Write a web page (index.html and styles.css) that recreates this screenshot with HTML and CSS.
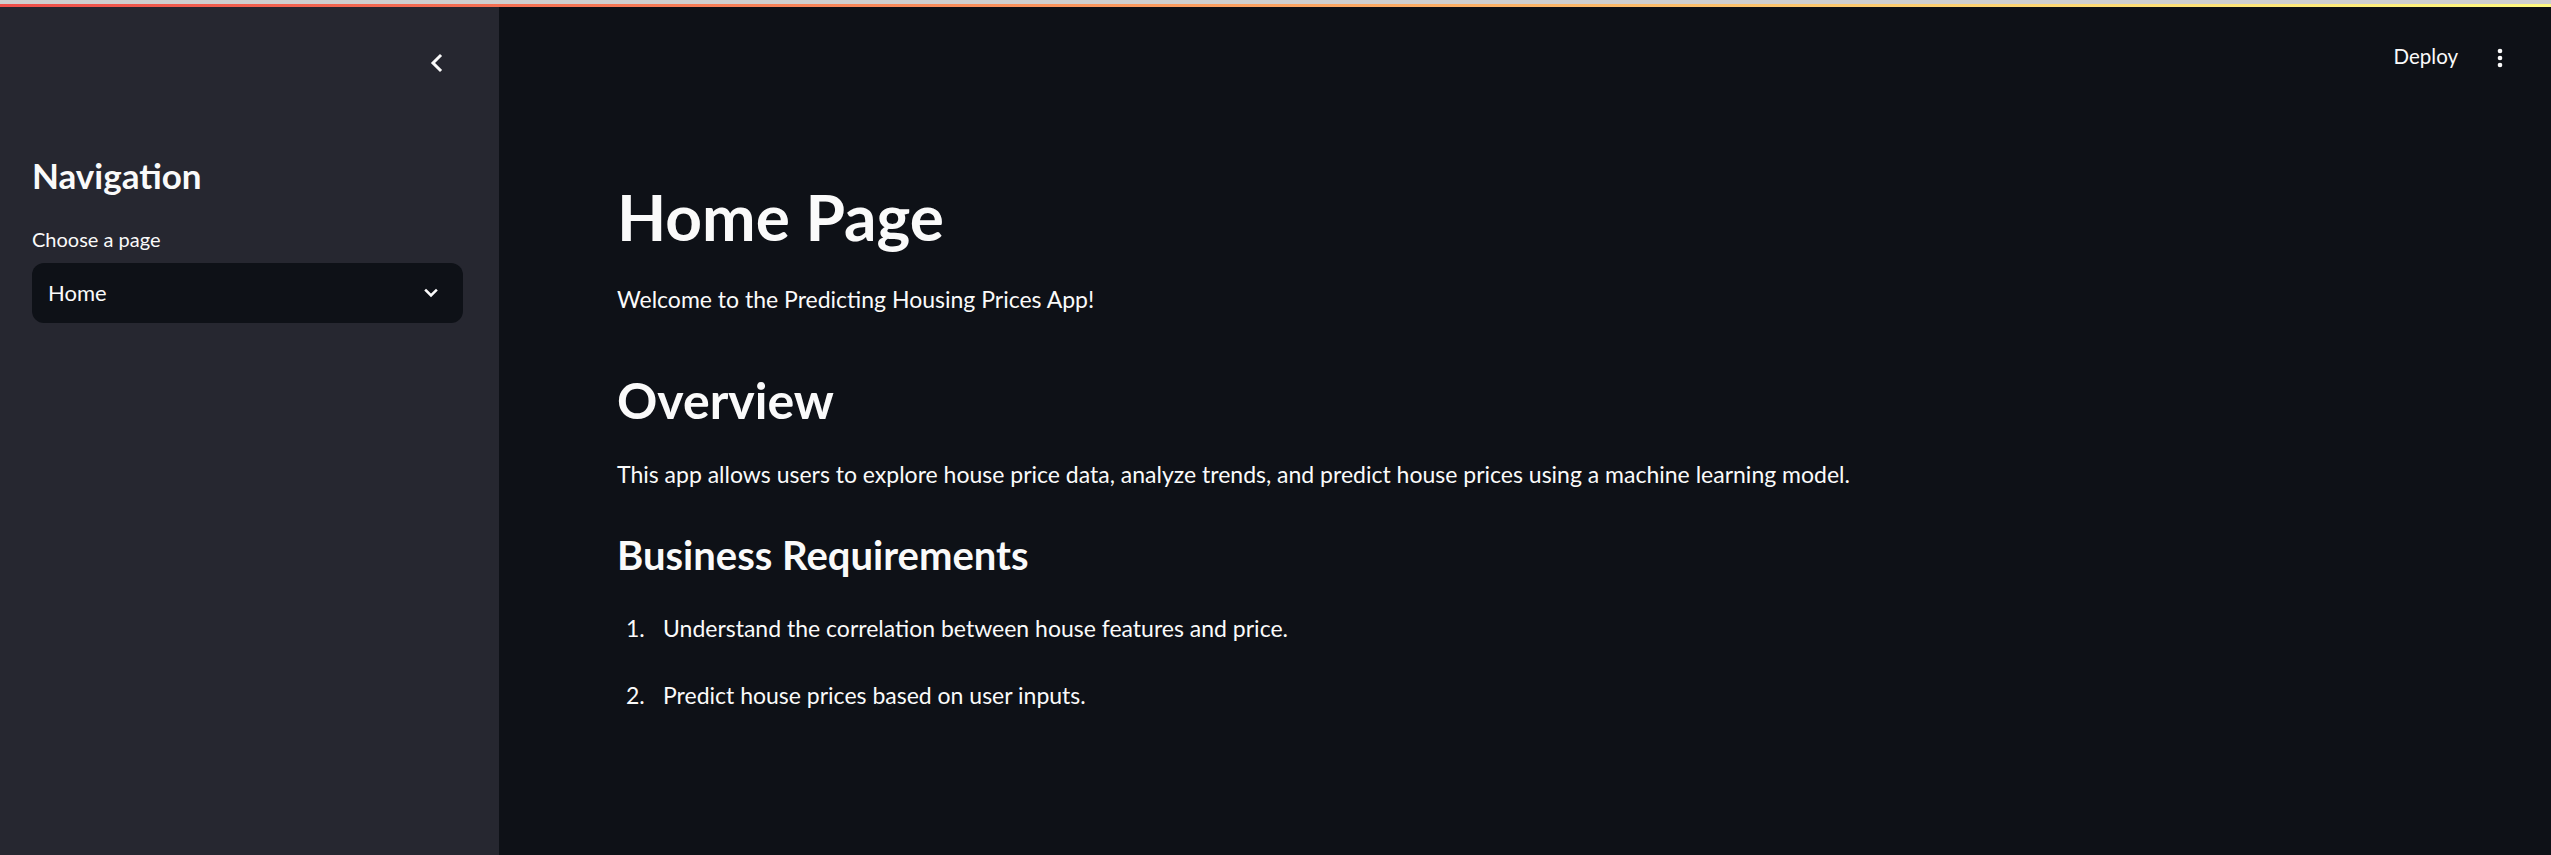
FILE: index.html
```html
<!DOCTYPE html>
<html lang="en">
<head>
<meta charset="utf-8">
<title>Home Page</title>
<link rel="stylesheet" href="styles.css">
</head>
<body>
<div class="chrome-line"></div>
<div class="decoration"></div>
<div class="app">
  <aside class="sidebar">
    <div class="sidebar-top">
      <button class="collapse" aria-label="Collapse sidebar">
        <svg viewBox="0 0 24 24" width="24" height="24"><path d="M15 5 L8 12 L15 19" fill="none" stroke="#fafafa" stroke-width="3" stroke-linecap="square" stroke-linejoin="miter"/></svg>
      </button>
    </div>
    <h2 class="side-title">Navigation</h2>
    <label class="side-label">Choose a page</label>
    <div class="select">
      <span class="select-value">Home</span>
      <svg class="select-chevron" viewBox="0 0 24 24" width="20" height="20"><path d="M6 9 L12 15 L18 9" fill="none" stroke="#fafafa" stroke-width="3" stroke-linecap="square"/></svg>
    </div>
  </aside>
  <main class="main">
    <header class="topbar">
      <span class="deploy">Deploy</span>
      <svg class="kebab" viewBox="0 0 24 24" width="28" height="28"><circle cx="12" cy="6" r="2" fill="#fafafa"/><circle cx="12" cy="12" r="2" fill="#fafafa"/><circle cx="12" cy="18" r="2" fill="#fafafa"/></svg>
    </header>
    <section class="content">
      <h1 class="h1">Home Page</h1>
      <p class="welcome">Welcome to the Predicting Housing Prices App!</p>
      <h2 class="h2">Overview</h2>
      <p class="overview">This app allows users to explore house price data, analyze trends, and predict house prices using a machine learning model.</p>
      <h3 class="h3">Business Requirements</h3>
      <ol class="reqs">
        <li class="req"><span class="num">1.</span><span>Understand the correlation between house features and price.</span></li>
        <li class="req"><span class="num">2.</span><span>Predict house prices based on user inputs.</span></li>
      </ol>
    </section>
  </main>
</div>
</body>
</html>
```
FILE: styles.css
```css
* { box-sizing: border-box; }
html, body {
  margin: 0;
  padding: 0;
  height: 100%;
  background: #0e1117;
  overflow: hidden;
}
body {
  font-family: Lato, "Liberation Sans", sans-serif;
  color: #fafafa;
  display: flex;
  flex-direction: column;
}
.chrome-line {
  height: 4px;
  background: #cfcfcf;
  flex: none;
}
.decoration {
  height: 3px;
  flex: none;
  background: linear-gradient(90deg, #ef4f4a 0%, #fb9a5e 45%, #fffa80 100%);
}
.app {
  flex: 1;
  display: flex;
  min-height: 0;
}
.sidebar {
  width: 499px;
  flex: none;
  background: #262730;
  padding: 0 36px 0 32px;
  display: flex;
  flex-direction: column;
}
.sidebar-top {
  height: 80px;
  display: flex;
  justify-content: flex-end;
  padding-top: 44px;
}
.collapse {
  background: none;
  border: 0;
  padding: 0;
  width: 24px;
  height: 24px;
  margin-right: 14.5px;
  display: flex;
}
.side-title {
  margin: 66.5px 0 0;
  font-size: 35px;
  line-height: 42px;
  font-weight: 700;
}
.side-label {
  margin-top: 31.8px;
  font-size: 20px;
  line-height: 24px;
  font-weight: 400;
}
.select {
  margin-top: 11.7px;
  height: 60px;
  background: #0e1117;
  border-radius: 12px;
  display: flex;
  align-items: center;
  justify-content: space-between;
  padding: 0 22px 0 16px;
}
.select-value {
  font-size: 22px;
  line-height: 26px;
}
.select-chevron { display: block; }
.main {
  flex: 1;
  display: flex;
  flex-direction: column;
  min-width: 0;
}
.topbar {
  height: 80px;
  flex: none;
  display: flex;
  justify-content: flex-end;
  align-items: flex-start;
  padding: 37px 37px 0 0;
  gap: 28px;
}
.deploy {
  font-size: 20.5px;
  line-height: 25px;
}
.kebab { display: block; }
.content {
  padding: 0 0 0 118px;
  display: flex;
  flex-direction: column;
  align-items: flex-start;
}
.h1 {
  margin: 91.8px 0 0;
  font-size: 64px;
  line-height: 76.8px;
  font-weight: 700;
}
.welcome, .overview {
  font-size: 23px;
  line-height: 38.4px;
  margin: 0;
}
.welcome { margin-top: 24.3px; }
.h2 {
  margin: 51.35px 0 0;
  font-size: 50px;
  line-height: 60px;
  font-weight: 700;
}
.overview { margin-top: 25.25px; }
.h3 {
  margin: 37.9px 0 0;
  font-size: 40px;
  line-height: 48px;
  font-weight: 700;
}
.reqs {
  list-style: none;
  margin: 29.7px 0 0;
  padding: 0 0 0 9px;
  display: flex;
  flex-direction: column;
  gap: 28.6px;
}
.req {
  display: flex;
  font-size: 23px;
  line-height: 38.4px;
}
.num {
  width: 37px;
  flex: none;
}
```
